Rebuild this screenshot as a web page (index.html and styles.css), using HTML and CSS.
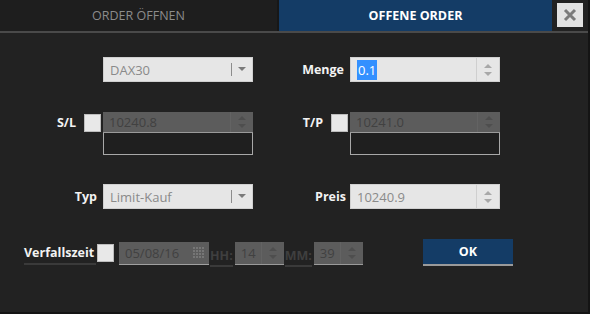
FILE: index.html
```html
<!DOCTYPE html>
<html lang="de">
<head>
<meta charset="UTF-8" />
<meta name="viewport" content="width=device-width, initial-scale=1" />
<title>Offene Order</title>
<link rel="stylesheet" href="styles.css">
</head>
<body>

<div class="window">
  <div class="tabs">
    <div class="tab">Order Öffnen</div>
    <div class="tab active">Offene Order</div>
    <button class="close" title="Schließen">
      <svg width="14" height="14" viewBox="0 0 14 14"><path d="M2 2 L12 12 M12 2 L2 12" stroke="#7a7a7a" stroke-width="3" fill="none"/></svg>
    </button>
  </div>

  <div class="form">
    <div class="row r1">
      <div class="field">
        <div class="select">
          <span class="value">DAX30</span>
          <span class="caret"></span>
        </div>
      </div>
      <div class="field">
        <span class="label gap6">Menge</span>
        <div class="input">
          <span class="value"><span class="sel">0.1</span></span>
          <span class="spinner"><i class="up"></i><i class="down"></i></span>
        </div>
      </div>
    </div>

    <div class="row r2">
      <div class="field top">
        <span class="label gap8">S/L</span>
        <span class="check"></span>
        <div class="stack">
          <div class="input disabled">
            <span class="value">10240.8</span>
            <span class="spinner"><i class="up"></i><i class="down"></i></span>
          </div>
          <div class="extra"></div>
        </div>
      </div>
      <div class="field top">
        <span class="label gap8">T/P</span>
        <span class="check"></span>
        <div class="stack">
          <div class="input disabled">
            <span class="value">10241.0</span>
            <span class="spinner"><i class="up"></i><i class="down"></i></span>
          </div>
          <div class="extra"></div>
        </div>
      </div>
    </div>

    <div class="row r3">
      <div class="field">
        <span class="label gap6">Typ</span>
        <div class="select">
          <span class="value">Limit-Kauf</span>
          <span class="caret"></span>
        </div>
      </div>
      <div class="field">
        <span class="label gap4">Preis</span>
        <div class="input">
          <span class="value">10240.9</span>
          <span class="spinner"><i class="up"></i><i class="down"></i></span>
        </div>
      </div>
    </div>

    <div class="expiry">
      <span class="label tag">Verfallszeit</span>
      <span class="check"></span>
      <div class="input disabled date">
        <span class="value">05/08/16</span>
        <svg class="cal" width="12" height="12" viewBox="0 0 12 12">
          <g fill="#767676">
            <rect x="0" y="0" width="2" height="2"/><rect x="3" y="0" width="2" height="2"/><rect x="6" y="0" width="2" height="2"/><rect x="9" y="0" width="2" height="2"/>
            <rect x="0" y="3" width="2" height="2"/><rect x="3" y="3" width="2" height="2"/><rect x="6" y="3" width="2" height="2"/><rect x="9" y="3" width="2" height="2"/>
            <rect x="0" y="6" width="2" height="2"/><rect x="3" y="6" width="2" height="2"/><rect x="6" y="6" width="2" height="2"/><rect x="9" y="6" width="2" height="2"/>
            <rect x="0" y="9" width="2" height="2"/><rect x="3" y="9" width="2" height="2"/><rect x="6" y="9" width="2" height="2"/><rect x="9" y="9" width="2" height="2"/>
          </g>
        </svg>
      </div>
      <span class="unit">HH:</span>
      <div class="input disabled small">
        <span class="value">14</span>
        <span class="spinner"><i class="up"></i><i class="down"></i></span>
      </div>
      <span class="unit">MM:</span>
      <div class="input disabled small">
        <span class="value">39</span>
        <span class="spinner"><i class="up"></i><i class="down"></i></span>
      </div>
      <button class="ok">OK</button>
    </div>
  </div>
</div>

</body>
</html>
```

FILE: styles.css
```css
body {
  margin: 0;
  background-color: #141414;
  font-family: "Open Sans", "Liberation Sans", Arial, sans-serif;
  color: white;
}

.window {
  width: 588px;
  height: 312px;
  background-color: #222222;
  overflow: hidden;
}

/* header */
.tabs {
  display: flex;
  height: 31px;
  border-bottom: 2px solid #4a4a4a;
  background-color: #222222;
}

.tab {
  width: 277px;
  display: flex;
  align-items: center;
  justify-content: center;
  background-color: #1e1e1e;
  color: #8c8c8c;
  font-size: 12.5px;
  text-transform: uppercase;
  border-right: 2px solid #171717;
}

.tab.active {
  width: 273px;
  background-color: #143c66;
  color: white;
  font-weight: bold;
  border-right: none;
}

.close {
  width: 26px;
  height: 24px;
  margin: 3px 0 0 5px;
  padding: 0;
  border: none;
  background-color: #e2e2e2;
  display: flex;
  align-items: center;
  justify-content: center;
}

/* form */
.form {
  padding-top: 24px;
}

.row {
  display: grid;
  grid-template-columns: 253px 247px;
}

.r2 { margin-top: 30px; }
.r3 { margin-top: 29px; }

.field {
  display: flex;
  align-items: center;
  justify-content: flex-end;
}

.field.top {
  align-items: flex-start;
}

.label {
  font-size: 12.5px;
  font-weight: bold;
  color: #f2f2f2;
  line-height: 21px;
}

.gap4 { margin-right: 4px; }
.gap6 { margin-right: 6px; }
.gap8 { margin-right: 8px; }

.check {
  width: 17px;
  height: 18px;
  margin: 2px 2px 0 0;
  background-color: #e8e8e8;
  border: 1px solid #bdbdbd;
  box-sizing: border-box;
}

.select,
.input {
  width: 150px;
  height: 25px;
  box-sizing: border-box;
  display: flex;
  align-items: center;
  background-color: #e6e6e6;
  border: 1px solid #d0d0d0;
  font-size: 13px;
  color: #8a8a8a;
}

.value {
  flex: 1;
  padding-left: 6px;
}

.sel {
  background-color: #3390ff;
  color: white;
  padding: 1px 1px;
}

.input .value { color: #8a8a8a; }
.r1 .input .value { color: #222; }

.caret {
  width: 20px;
  height: 13px;
  border-left: 1px solid #8c8c8c;
  position: relative;
}

.caret::after {
  content: '';
  position: absolute;
  left: 6px;
  top: 4px;
  border-left: 4px solid transparent;
  border-right: 4px solid transparent;
  border-top: 4px solid #7a7a7a;
}

.spinner {
  width: 22px;
  height: 100%;
  border-left: 1px solid #cfcfcf;
  display: flex;
  flex-direction: column;
  align-items: center;
  justify-content: center;
  gap: 4px;
}

.spinner i {
  display: block;
  border-left: 4px solid transparent;
  border-right: 4px solid transparent;
}

.spinner .up { border-bottom: 4px solid #a8a8a8; }
.spinner .down { border-top: 4px solid #a8a8a8; }

.input.disabled {
  height: 21px;
  background-color: #5c5c5c;
  border: none;
  border-bottom: 1px solid #9a9a9a;
}

.input.disabled .value { color: #414141; }
.input.disabled .spinner { border-left: 1px solid #636363; }
.input.disabled .spinner .up { border-bottom-color: #4e4e4e; }
.input.disabled .spinner .down { border-top-color: #4e4e4e; }

.stack {
  width: 150px;
}

.extra {
  height: 22px;
  box-sizing: border-box;
  border: 1px solid #a8a8a8;
  border-top: none;
  background-color: #1f1f1f;
}

/* expiry row */
.expiry {
  display: flex;
  align-items: center;
  margin-top: 30px;
  padding-left: 24px;
  height: 27px;
}

.tag {
  width: 72px;
  line-height: 20px;
  border-bottom: 2px solid #3a3a3a;
  margin-top: 2px;
}

.expiry .check {
  margin: 0 5px 0 1px;
}

.input.date {
  width: 90px;
  height: 23px;
  margin-top: 2px;
  border-bottom-color: #a0a0a0;
}

.cal {
  margin-right: 4px;
}

.unit {
  font-size: 12.5px;
  font-weight: bold;
  color: #3f3f3f;
  line-height: 18px;
  margin: 8px 2px 0 1px;
  border-bottom: 2px solid #3a3a3a;
}

.input.small {
  width: 49px;
  height: 23px;
  margin-top: 2px;
}

.ok {
  width: 90px;
  height: 27px;
  margin-left: 60px;
  padding: 0;
  border: none;
  border-bottom: 2px solid #9a9a9a;
  background-color: #143c66;
  color: white;
  font-family: "Open Sans", "Liberation Sans", Arial, sans-serif;
  font-size: 12.5px;
  font-weight: bold;
}
```
